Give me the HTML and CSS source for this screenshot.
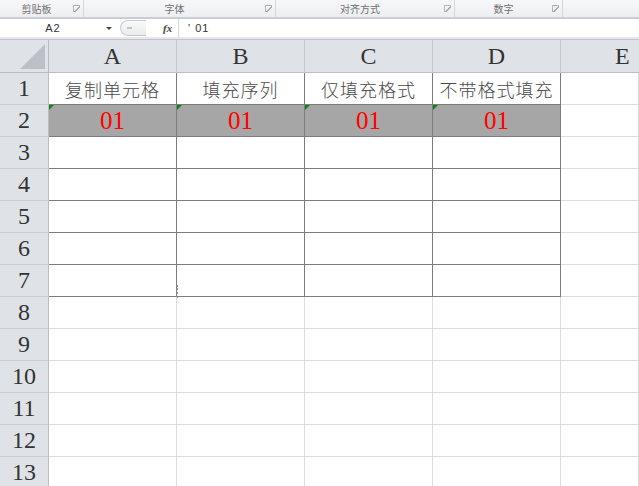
FILE: index.html
```html
<!DOCTYPE html>
<html lang="zh-CN">
<head>
    <meta charset="UTF-8">
    <title>填充选项</title>
    <link rel="stylesheet" href="styles.css">
</head>
<body>
    <!-- 功能区分组标题 -->
    <div class="ribbon">
        <div class="group g1"><span class="glabel">剪贴板</span><i class="launch"></i></div>
        <div class="group g2"><span class="glabel">字体</span><i class="launch"></i></div>
        <div class="group g3"><span class="glabel">对齐方式</span><i class="launch"></i></div>
        <div class="group g4"><span class="glabel">数字</span><i class="launch"></i></div>
        <div class="group rest"></div>
    </div>
    <!-- 编辑栏 -->
    <div class="fbar">
        <div class="namebox"><span class="name">A2</span><span class="drop"></span></div>
        <div class="pill"><span class="pill_dot"></span></div>
        <div class="fx">fx</div>
        <div class="formula">' 01</div>
    </div>
    <div class="band"></div>
    <!-- 表格区 -->
    <div class="sheet">
        <div class="corner"></div>
        <div class="hd">A</div>
        <div class="hd">B</div>
        <div class="hd">C</div>
        <div class="hd">D</div>
        <div class="hd hd_cut">E</div>

        <div class="rh">1</div>
        <div class="c t zh">复制单元格</div>
        <div class="c t zh">填充序列</div>
        <div class="c t zh">仅填充格式</div>
        <div class="c t zh">不带格式填充</div>
        <div class="c"></div>

        <div class="rh">2</div>
        <div class="c t fill num">01</div>
        <div class="c t fill num">01</div>
        <div class="c t fill num">01</div>
        <div class="c t fill num">01</div>
        <div class="c"></div>

        <div class="rh">3</div>
        <div class="c t"></div><div class="c t"></div><div class="c t"></div><div class="c t"></div><div class="c"></div>
        <div class="rh">4</div>
        <div class="c t"></div><div class="c t"></div><div class="c t"></div><div class="c t"></div><div class="c"></div>
        <div class="rh">5</div>
        <div class="c t"></div><div class="c t"></div><div class="c t"></div><div class="c t"></div><div class="c"></div>
        <div class="rh">6</div>
        <div class="c t"></div><div class="c t"></div><div class="c t"></div><div class="c t"></div><div class="c"></div>
        <div class="rh">7</div>
        <div class="c t"><span class="handle"></span></div><div class="c t"></div><div class="c t"></div><div class="c t"></div><div class="c"></div>

        <div class="rh">8</div>
        <div class="c"></div><div class="c"></div><div class="c"></div><div class="c"></div><div class="c"></div>
        <div class="rh">9</div>
        <div class="c"></div><div class="c"></div><div class="c"></div><div class="c"></div><div class="c"></div>
        <div class="rh">10</div>
        <div class="c"></div><div class="c"></div><div class="c"></div><div class="c"></div><div class="c"></div>
        <div class="rh">11</div>
        <div class="c"></div><div class="c"></div><div class="c"></div><div class="c"></div><div class="c"></div>
        <div class="rh">12</div>
        <div class="c"></div><div class="c"></div><div class="c"></div><div class="c"></div><div class="c"></div>
        <div class="rh">13</div>
        <div class="c"></div><div class="c"></div><div class="c"></div><div class="c"></div><div class="c"></div>
    </div>
</body>
</html>
```

FILE: styles.css
```css
* {
    margin: 0;
    padding: 0;
    box-sizing: border-box;
}
body {
    width: 639px;
    height: 486px;
    overflow: hidden;
    background: #fff;
    font-family: "Liberation Serif", "Noto Sans CJK SC", serif;
}
/* 功能区 */
.ribbon {
    display: flex;
    height: 19px;
    background: linear-gradient(#f7f8f9, #eceef1);
    border-bottom: 2px solid #c9ced5;
}
.group {
    display: flex;
    align-items: center;
    border-right: 1px solid #d3d7dc;
    padding-right: 3px;
}
.g1 { width: 84px; }
.g2 { width: 192px; }
.g3 { width: 179px; }
.g4 { width: 108px; }
.rest { flex: 1; border-right: none; }
.glabel {
    flex: 1;
    text-align: center;
    font-family: "Noto Sans CJK SC", sans-serif;
    font-size: 10px;
    color: #707070;
}
.launch {
    width: 7px;
    height: 7px;
    border-top: 1px solid #9a9a9a;
    border-left: 1px solid #9a9a9a;
    background: linear-gradient(135deg, transparent 45%, #8a8a8a 45%, #8a8a8a 60%, transparent 60%);
    opacity: 0.7;
}
/* 编辑栏 */
.fbar {
    display: flex;
    align-items: center;
    height: 18px;
    background: #fff;
    font-family: "Liberation Sans", sans-serif;
    font-size: 11px;
    color: #333;
}
.namebox {
    display: flex;
    align-items: center;
    width: 120px;
}
.name {
    width: 106px;
    text-align: center;
    letter-spacing: 1px;
}
.drop {
    width: 0;
    height: 0;
    border-left: 3px solid transparent;
    border-right: 3px solid transparent;
    border-top: 3px solid #444;
}
.pill {
    display: flex;
    align-items: center;
    width: 26px;
    height: 16px;
    padding-left: 6px;
    border: 1px solid #c8ccd1;
    border-right: none;
    border-radius: 8px 0 0 8px;
    background: linear-gradient(#fafafa, #e8eaec);
}
.pill_dot {
    width: 5px;
    height: 2px;
    background: #c2c2c2;
}
.fx {
    width: 32px;
    padding-left: 17px;
    font-family: "Liberation Serif", serif;
    font-style: italic;
    font-weight: bold;
    font-size: 11px;
    color: #444;
}
.formula {
    flex: 1;
    height: 18px;
    line-height: 18px;
    padding-left: 9px;
    border-left: 1px solid #d6d9dd;
    letter-spacing: 1px;
}
.band {
    height: 2px;
    background: #e6e8eb;
}
/* 工作表网格,E 列只露出一部分 */
.sheet {
    display: grid;
    grid-template-columns: 49px repeat(4, 128px) 1fr;
    grid-template-rows: 33px;
    grid-auto-rows: 32px;
    border-top: 1px solid #bfc4ca;
    overflow: hidden;
}
.corner,
.hd,
.rh {
    display: flex;
    align-items: center;
    justify-content: center;
    background: #dfe3e8;
    color: #333;
    font-size: 24px;
}
.corner {
    position: relative;
    border-right: 1px solid #b9bec5;
    border-bottom: 1px solid #b9bec5;
}
.corner::after {
    content: "";
    position: absolute;
    left: 20px;
    top: 4px;
    width: 25px;
    height: 25px;
    background: #bcc1c7;
    clip-path: polygon(100% 0, 100% 100%, 0 100%);
}
.hd {
    border-right: 1px solid #c3c8ce;
    border-bottom: 1px solid #b9bec5;
}
.hd_cut {
    justify-content: flex-start;
    padding-left: 54px;
    border-right: none;
}
.rh {
    border-right: 1px solid #b9bec5;
    border-bottom: 1px solid #c9cdd3;
}
.c {
    position: relative;
    display: flex;
    align-items: center;
    justify-content: center;
    border-right: 1px solid #dadcdf;
    border-bottom: 1px solid #dadcdf;
}
.c.t {
    border-right-color: #7d7d7d;
    border-bottom-color: #7d7d7d;
}
.zh {
    font-family: "Noto Sans CJK SC", sans-serif;
    font-weight: 300;
    font-size: 18px;
    letter-spacing: 1px;
    color: #4a4a4a;
}
.fill {
    background: #a6a6a6;
}
.num {
    color: #ff0000;
    font-size: 25px;
}
/* 文本型数字的绿色小三角 */
.num::before {
    content: "";
    position: absolute;
    left: 0;
    top: 0;
    width: 5px;
    height: 5px;
    background: #1b7d1b;
    clip-path: polygon(0 0, 100% 0, 0 100%);
}
.handle {
    position: absolute;
    right: -2px;
    bottom: -2px;
    width: 2px;
    height: 13px;
    border-left: 2px dotted #8c8c8c;
}
```
